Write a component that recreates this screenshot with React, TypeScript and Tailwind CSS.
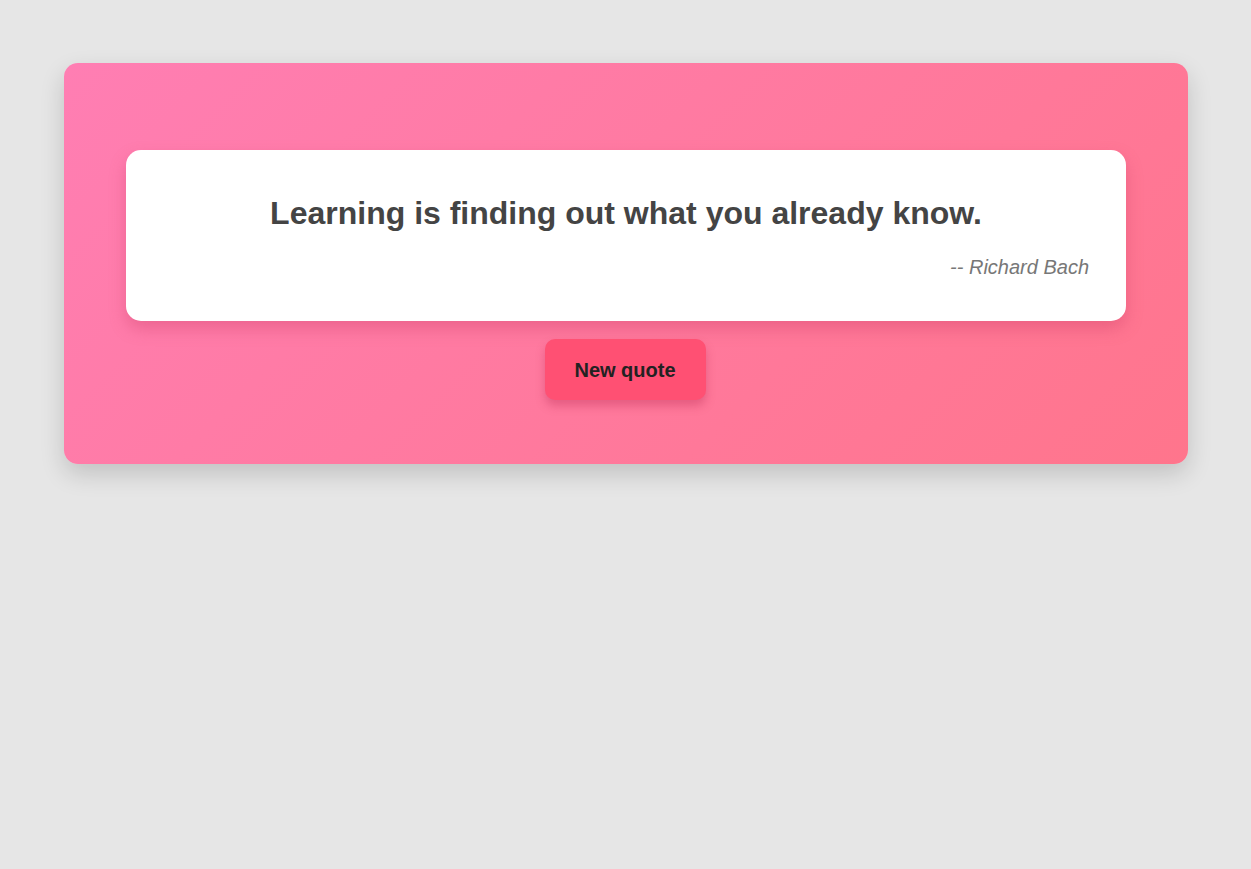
export default function App() {
  return (
    <div className="min-h-screen bg-[#e6e6e6] pt-[63px] pl-16 pr-[63px] font-['Liberation_Sans',Arial,sans-serif]">
      <div className="rounded-[14px] bg-[linear-gradient(135deg,#ff7eb3,#ff758c)] shadow-[0_10px_25px_rgba(0,0,0,0.16)] pt-[87px] pb-[64px] flex flex-col items-center">
        <div className="w-[1000px] h-[171px] bg-white rounded-[15px] shadow-[0_8px_16px_rgba(200,60,100,0.35)] px-[37px] pt-[45px]">
          <h1 className="text-[32px] font-bold text-[#444] text-center leading-[37px]">
            Learning is finding out what you already know.
          </h1>
          <p className="text-[20px] italic text-[#777] text-right mt-[24px] leading-[23px]">
            -- Richard Bach
          </p>
        </div>
        <button className="mt-[18px] mr-[2px] w-[161px] h-[61px] rounded-[10px] bg-[#ff5073] text-[#222] text-[20px] font-bold shadow-[0_6px_10px_rgba(180,40,80,0.35)]">
          New quote
        </button>
      </div>
    </div>
  );
}
